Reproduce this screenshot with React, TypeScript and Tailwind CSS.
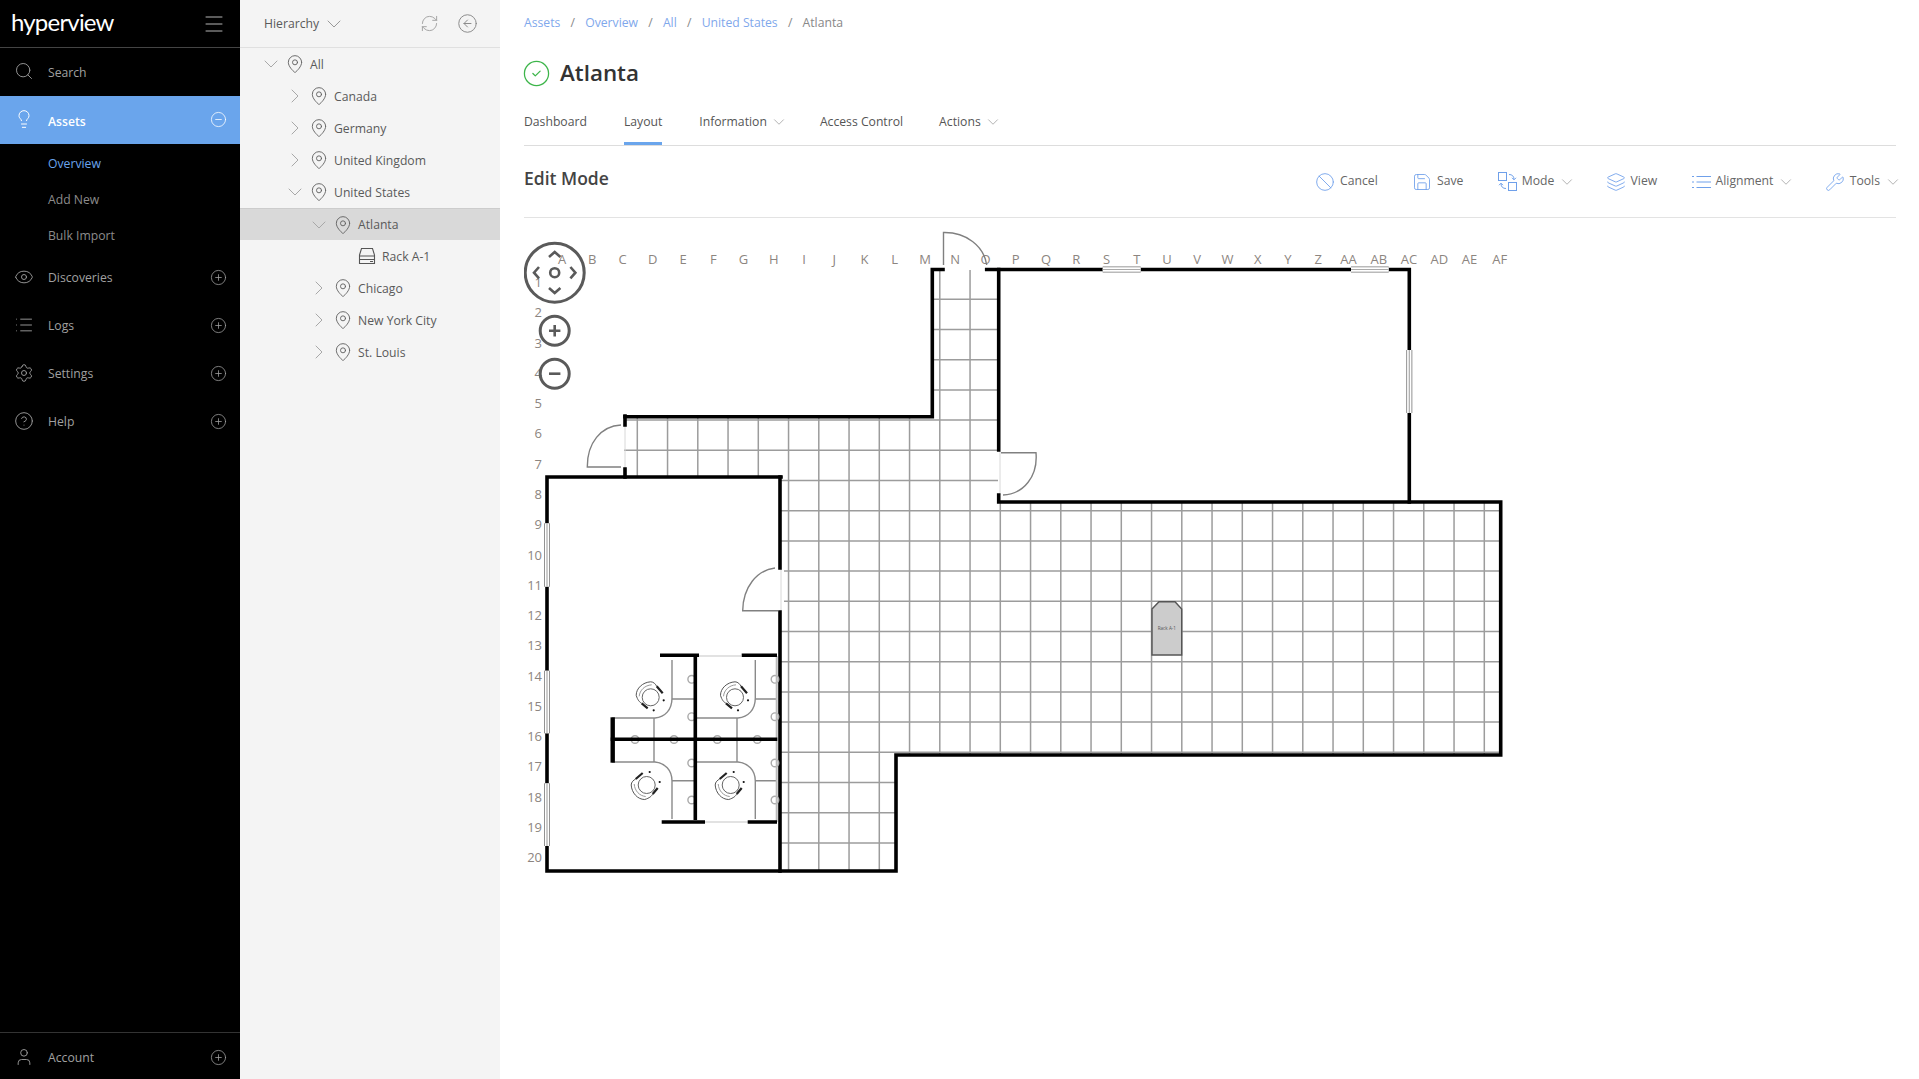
import React from "react";
import { Search, Lightbulb, Eye, List, Settings, CircleHelp, CirclePlus, CircleMinus, User, MapPin, ChevronDown, ChevronRight, RefreshCw, CircleArrowLeft, Ban, Save, Layers, Wrench, CircleCheck, Menu } from "lucide-react";

const cols = "A B C D E F G H I J K L M N O P Q R S T U V W X Y Z AA AB AC AD AE AF".split(" ");

function NavRow({ icon: I, label, cls = "h-12" }: { icon: any; label: string; cls?: string }) {
  return (
    <div className={`flex items-center pl-[14px] pr-[13px] text-[#a0a0a0] ${cls}`}>
      <I size={20} strokeWidth={1.1} className="shrink-0 mb-[2px]" />
      <span className="ml-[14px] flex-1">{label}</span>
      <CirclePlus size={17} strokeWidth={1.1} className="mb-[2px]" />
    </div>
  );
}

function TreeRow({ level, label, open, leaf, active }: { level: number; label: string; open?: boolean; leaf?: boolean; active?: boolean }) {
  const pad = ["pl-[24px]", "pl-[48px]", "pl-[72px]", "pl-[96px]"][level];
  return (
    <div className={`flex items-center h-8 ${pad} ${active ? "bg-[#d9d9d9] border-t border-[#cccccc]" : ""}`}>
      <span className="w-[14px] flex justify-center text-[#a8a8a8] shrink-0">
        {leaf ? null : open ? <ChevronDown size={24} strokeWidth={1} className="shrink-0" /> : <ChevronRight size={24} strokeWidth={1} className="shrink-0" />}
      </span>
      <span className="w-[20px] flex justify-center shrink-0 ml-[7px] text-[#5f5f5f]">
        {leaf ? <RackIcon /> : <MapPin size={20} strokeWidth={1.1} className="shrink-0" />}
      </span>
      <span className="ml-[5px] pt-[2px] text-[#5a5a5a]">{label}</span>
    </div>
  );
}

function RackIcon() {
  return (
    <svg width="18" height="18" viewBox="0 0 18 18" fill="none" stroke="#555" strokeWidth="1.1">
      <path d="M1.5 8 L3.5 1.5 H14.5 L16.5 8 V16.5 H1.5 Z" />
      <path d="M1.5 9 H16.5 M1.5 12.5 H16.5 M12 14.5 H15" />
    </svg>
  );
}

function ModeIcon() {
  return (
    <svg width="19" height="19" viewBox="0 0 19 19" fill="none" stroke="#6fa0ea" strokeWidth="1">
      <rect x="0.5" y="0.5" width="8" height="8" />
      <rect x="10.5" y="10.5" width="8" height="8" />
      <path d="M11 2.5 C14 2.5 16 4 16 7.5 M14 5.8 L16 7.8 L18 5.8 M8 16.5 C5 16.5 3 15 3 11.5 M1 13.2 L3 11.2 L5 13.2" />
    </svg>
  );
}

function AlignIcon() {
  return (
    <svg width="19" height="20" viewBox="0 0 19 20" fill="none" stroke="#6fa0ea" strokeWidth="1">
      <path d="M0 4.5 H2 M4.5 4.5 H19 M0 10 H2 M4.5 10 H19 M0 15.5 H2 M4.5 15.5 H19" />
    </svg>
  );
}

function Chev() {
  return <ChevronDown size={18} strokeWidth={1} className="ml-[3.5px] -mr-[4.5px] text-[#999999]" />;
}

function ToolItem({ icon, label, chev }: { icon: React.ReactNode; label: string; chev?: boolean }) {
  return (
    <div className="flex items-center text-[#666666]">
      {icon}
      <span className="ml-[5px]">{label}</span>
      {chev ? <Chev /> : null}
    </div>
  );
}

function Chair({ x, y, r }: { x: number; y: number; r: number }) {
  return (
    <g transform={`translate(${x} ${y}) rotate(${r})`} fill="none">
      <circle r="8.5" stroke="#666" strokeWidth="1" />
      <path d="M-14.5 -2 C-14.5 -9 -8 -15 0 -15.5 C3 -15.5 5 -13 6 -11 M-14.5 -2 C-13 3 -11 5 -9 6" stroke="#555" strokeWidth="1" />
      <path d="M-11.5 -1 C-11 -7 -6 -12 1 -12.5" stroke="#999" strokeWidth="1" />
      <path d="M6 -11 L12 -4 M-9 6 L-3 11" stroke="#222" strokeWidth="2.2" />
      <circle cx="13" cy="3" r="1.1" fill="#111" />
      <circle cx="3" cy="13" r="1.1" fill="#111" />
    </g>
  );
}

function Floorplan() {
  const wall = "#000";
  const vs = Array.from({ length: 29 }, (_, k) => 637.3 + 30.25 * k);
  const hs = Array.from({ length: 19 }, (_, k) => 299.3 + 30.2 * k);
  const windows = [
    [1102.7, 269.5, 1140.7, 269.5], [1351, 269.5, 1388.7, 269.5], [1409.3, 350, 1409.3, 413],
    [547, 523.3, 547, 586.7], [547, 670.7, 547, 733.3], [547, 783.3, 547, 846],
  ];
  const outlets = [
    [691.7, 679.3], [691.7, 716.7], [691.7, 763], [691.7, 800],
    [775, 679.3], [775, 716.7], [775, 763], [775, 800],
    [635, 739.5], [674, 739.5], [717.3, 739.5], [757.3, 739.5],
  ];
  return (
    <svg className="block" width="1000" height="680" viewBox="524 218 1000 680" fontFamily="'Open Sans', sans-serif">
      <defs>
        <clipPath id="floor">
          <path d="M932 270 H998 V502 H1500 V755 H896 V871 H780 V477 H624 V417 H932 Z" />
        </clipPath>
      </defs>
      {cols.map((c, i) => (
        <text key={c} x={562 + 30.25 * i} y={264} textAnchor="middle" fontSize="13" fill="#8c8580">{c}</text>
      ))}
      {Array.from({ length: 20 }, (_, i) => (
        <text key={i} x={542} y={287 + 30.28 * i} textAnchor="end" fontSize="13" fill="#8c8580">{i + 1}</text>
      ))}
      <g clipPath="url(#floor)" stroke="#9c9c9c" strokeWidth="1.5">
        {vs.map((x) => <line key={x} x1={x} x2={x} y1={260} y2={880} />)}
        {hs.map((y) => <line key={y} x1={620} x2={1505} y1={y} y2={y} />)}
      </g>
      <rect x="778" y="569" width="6" height="42" fill="#fff" />
      <path d="M781 569 V611 M625 425 V469 M1000 451 V495" stroke="#d8d8d8" strokeWidth="1" />
      <g fill="none" stroke={wall} strokeWidth="3.6" strokeLinecap="square">
        <path d="M943 269.5 H932.3 V416.7 H625" />
        <path d="M986.7 269.5 H998.7 V450" />
        <path d="M998.7 269.5 H1409.3 V502" />
        <path d="M625 416 V425 M625 469 V477" />
        <path d="M547 477 H781 M547 477 V871 H896 V755 H1500.7 V502 H998.7 V495" />
        <path d="M780 477 V568 M780 612 V871" />
      </g>
      {windows.map(([a, b, c, d], i) => (
        <g key={i}>
          <line x1={a} y1={b} x2={c} y2={d} stroke="#777" strokeWidth="6" />
          <line x1={a} y1={b} x2={c} y2={d} stroke="#fff" strokeWidth="4.4" />
          <line x1={a} y1={b} x2={c} y2={d} stroke="#aaa" strokeWidth="1.2" />
        </g>
      ))}
      <g fill="none" stroke="#808080" strokeWidth="1.4">
        <path d="M943.5 265 V232.5 C966 232 984 246 986.7 265" />
        <path d="M621 425 C601 426 587 443 587.3 467 H621" />
        <path d="M1001 452.7 H1036 C1038 476 1024 494 1003 495" />
        <path d="M775 568 C757 570 743 587 742.7 610.7 H778" />
      </g>
      {/* cubicles */}
      <g fill="none" stroke="#8a8a8a" strokeWidth="1.4">
        <path d="M672 660 V698 C672 710 665 717 655 718 H612 M672 699 H695 M654 718 V762 M612 762 H655 C665 763 672 770 672 781 V819 M672 780.7 H695" />
        <path d="M755.3 660 V698 C755.3 710 748 717 738 718 H696 M755.3 699 H777 M737 718 V762 M696 762 H738 C748 763 755.3 770 755.3 781 V819 M755.3 780.7 H777" />
        {outlets.map(([x, y], i) => <circle key={i} cx={x} cy={y} r="3.8" fill="#fff" stroke="#aaa" />)}
        <path d="M776.7 656 V822" stroke="#bbbbbb" strokeWidth="2" />
        <path d="M699 656 H741 M705 822 H748" stroke="#e2e2e2" strokeWidth="2" />
      </g>
      <g stroke="#000" strokeWidth="3.6" fill="none">
        <path d="M695.3 656 V820 M610.7 739.3 H777.3" />
        <path d="M660 655.3 H699 M741.7 655.3 H777 M661.7 822 H705 M747.7 822 H777" />
        <path d="M612.7 717.3 V762.7" strokeWidth="4.4" />
      </g>
      <Chair x={650.7} y={697.3} r={0} />
      <Chair x={735} y={697.3} r={0} />
      <Chair x={646.7} y={785} r={-90} />
      <Chair x={730.7} y={785} r={-90} />
      {/* rack */}
      <path d="M1152 609 L1159 601.7 H1175 L1181.7 609 V655 H1152 Z" fill="#cccccc" stroke="#555" strokeWidth="1.4" />
      <text x="1166.8" y="630" textAnchor="middle" fontSize="4.6" fill="#555">Rack A-1</text>
      {/* controls */}
      <g fill="none" stroke="#5a5a5a" strokeWidth="3">
        <circle cx="554.7" cy="272.7" r="29.5" />
        <circle cx="554.7" cy="272.7" r="4.5" strokeWidth="2.6" />
        <path d="M549 257 L554.7 252 L560.4 257 M549 288 L554.7 293 L560.4 288 M539 267 L534 272.7 L539 278.4 M570.4 267 L575.4 272.7 L570.4 278.4" strokeWidth="2.6" />
        <circle cx="554.7" cy="330.7" r="14.5" />
        <path d="M549 330.7 H560.4 M554.7 325 V336.4" strokeWidth="2.6" />
        <circle cx="554.7" cy="373.7" r="14.5" />
        <path d="M549 373.7 H560.4" strokeWidth="2.6" />
      </g>
    </svg>
  );
}

export default function App() {
  return (
    <div className="flex h-[1079px] w-[1919px] overflow-hidden bg-white text-[12.2px] font-['Open_Sans',sans-serif]">
      <aside className="w-[240px] shrink-0 bg-black flex flex-col">
        <div className="h-12 border-b border-[#444444] flex items-center pl-[11px] pr-[14px] justify-between">
          <span className="text-white text-[24px] leading-none font-['Lato',sans-serif] tracking-[-0.8px] mb-[4px]">hyperview</span>
          <Menu size={24} strokeWidth={1} className="text-[#b5b5b5]" />
        </div>
        <div className="flex items-center h-12 pl-[14px] text-[#a0a0a0]">
          <Search size={20} strokeWidth={1.1} className="mb-[2px]" />
          <span className="ml-[14px] pt-[3px]">Search</span>
        </div>
        <div className="flex items-center h-12 pl-[14px] pr-[13px] bg-[#6aa5ec] text-white">
          <Lightbulb size={20} strokeWidth={1.2} className="mb-[2px]" />
          <span className="ml-[14px] flex-1 font-semibold pt-[4px]">Assets</span>
          <CircleMinus size={17} strokeWidth={1.1} className="mb-[2px]" />
        </div>
        <div className="flex flex-col pl-[48px] pt-[2px]">
          <div className="h-9 flex items-center text-[#6aa5ec]">Overview</div>
          <div className="h-9 flex items-center text-[#8c8c8c]">Add New</div>
          <div className="h-9 flex items-center text-[#8c8c8c]">Bulk Import</div>
        </div>
        <NavRow icon={Eye} label="Discoveries" />
        <NavRow icon={List} label="Logs" />
        <NavRow icon={Settings} label="Settings" />
        <NavRow icon={CircleHelp} label="Help" />
        <div className="flex-1" />
        <div className="border-t border-[#333333]">
          <NavRow icon={User} label="Account" cls="h-[46px] pt-[4px]" />
        </div>
      </aside>

      <section className="w-[260px] shrink-0 bg-[#f4f4f4]">
        <div className="h-12 border-b border-[#e0e0e0] flex items-center pl-[24px] pr-[22px] text-[#5a5a5a]">
          <span className="pt-[1px]">Hierarchy</span>
          <ChevronDown size={24} strokeWidth={1} className="ml-[3px] text-[#999999]" />
          <div className="flex-1" />
          <RefreshCw size={19} strokeWidth={1.1} className="text-[#999999]" />
          <CircleArrowLeft size={21} strokeWidth={1.1} className="ml-[18px] text-[#888888]" />
        </div>
        <TreeRow level={0} label="All" open />
        <TreeRow level={1} label="Canada" />
        <TreeRow level={1} label="Germany" />
        <TreeRow level={1} label="United Kingdom" />
        <TreeRow level={1} label="United States" open />
        <TreeRow level={2} label="Atlanta" open active />
        <TreeRow level={3} label="Rack A-1" leaf />
        <TreeRow level={2} label="Chicago" />
        <TreeRow level={2} label="New York City" />
        <TreeRow level={2} label="St. Louis" />
      </section>

      <main className="flex-1 pl-[24px] pr-[23px] min-w-0">
        <div className="h-[44px] pt-[2px] flex items-center gap-[10.2px] text-[#7fa8ec]">
          <span>Assets</span><span className="text-[#888888]">/</span>
          <span>Overview</span><span className="text-[#888888]">/</span>
          <span>All</span><span className="text-[#888888]">/</span>
          <span>United States</span><span className="text-[#888888]">/</span>
          <span className="text-[#888888]">Atlanta</span>
        </div>
        <div className="h-[58px] flex items-center">
          <CircleCheck size={29} strokeWidth={1.05} className="text-[#3db54a] -ml-[2px]" />
          <h1 className="ml-[9px] text-[22.4px] font-semibold text-[#333333]">Atlanta</h1>
        </div>
        <div className="flex h-[44px] border-b border-[#dddddd] text-[#555555]">
          <div className="flex items-center h-full pb-[3px]">Dashboard</div>
          <div className="flex items-center h-full ml-[37px] border-b-[3px] border-[#6aa5ec]">Layout</div>
          <div className="flex items-center h-full ml-[37px] pb-[3px]">Information<Chev /></div>
          <div className="flex items-center h-full ml-[36px] pb-[3px]">Access Control</div>
          <div className="flex items-center h-full ml-[36px] pb-[3px]">Actions<Chev /></div>
        </div>
        <div className="h-[72px] border-b border-[#e3e3e3] flex items-center justify-between">
          <h2 className="text-[17.5px] font-semibold text-[#444444] mb-[7px]">Edit Mode</h2>
          <div className="flex items-center gap-[34.3px] -mr-[1px]">
            <ToolItem icon={<Ban size={20} strokeWidth={1.05} className="text-[#6fa0ea]" />} label="Cancel" />
            <ToolItem icon={<Save size={20} strokeWidth={1.05} className="text-[#6fa0ea]" />} label="Save" />
            <ToolItem icon={<ModeIcon />} label="Mode" chev />
            <ToolItem icon={<Layers size={20} strokeWidth={1.05} className="text-[#6fa0ea]" />} label="View" />
            <ToolItem icon={<AlignIcon />} label="Alignment" chev />
            <ToolItem icon={<Wrench size={20} strokeWidth={1.05} className="text-[#6fa0ea]" />} label="Tools" chev />
          </div>
        </div>
        <Floorplan />
      </main>
    </div>
  );
}
